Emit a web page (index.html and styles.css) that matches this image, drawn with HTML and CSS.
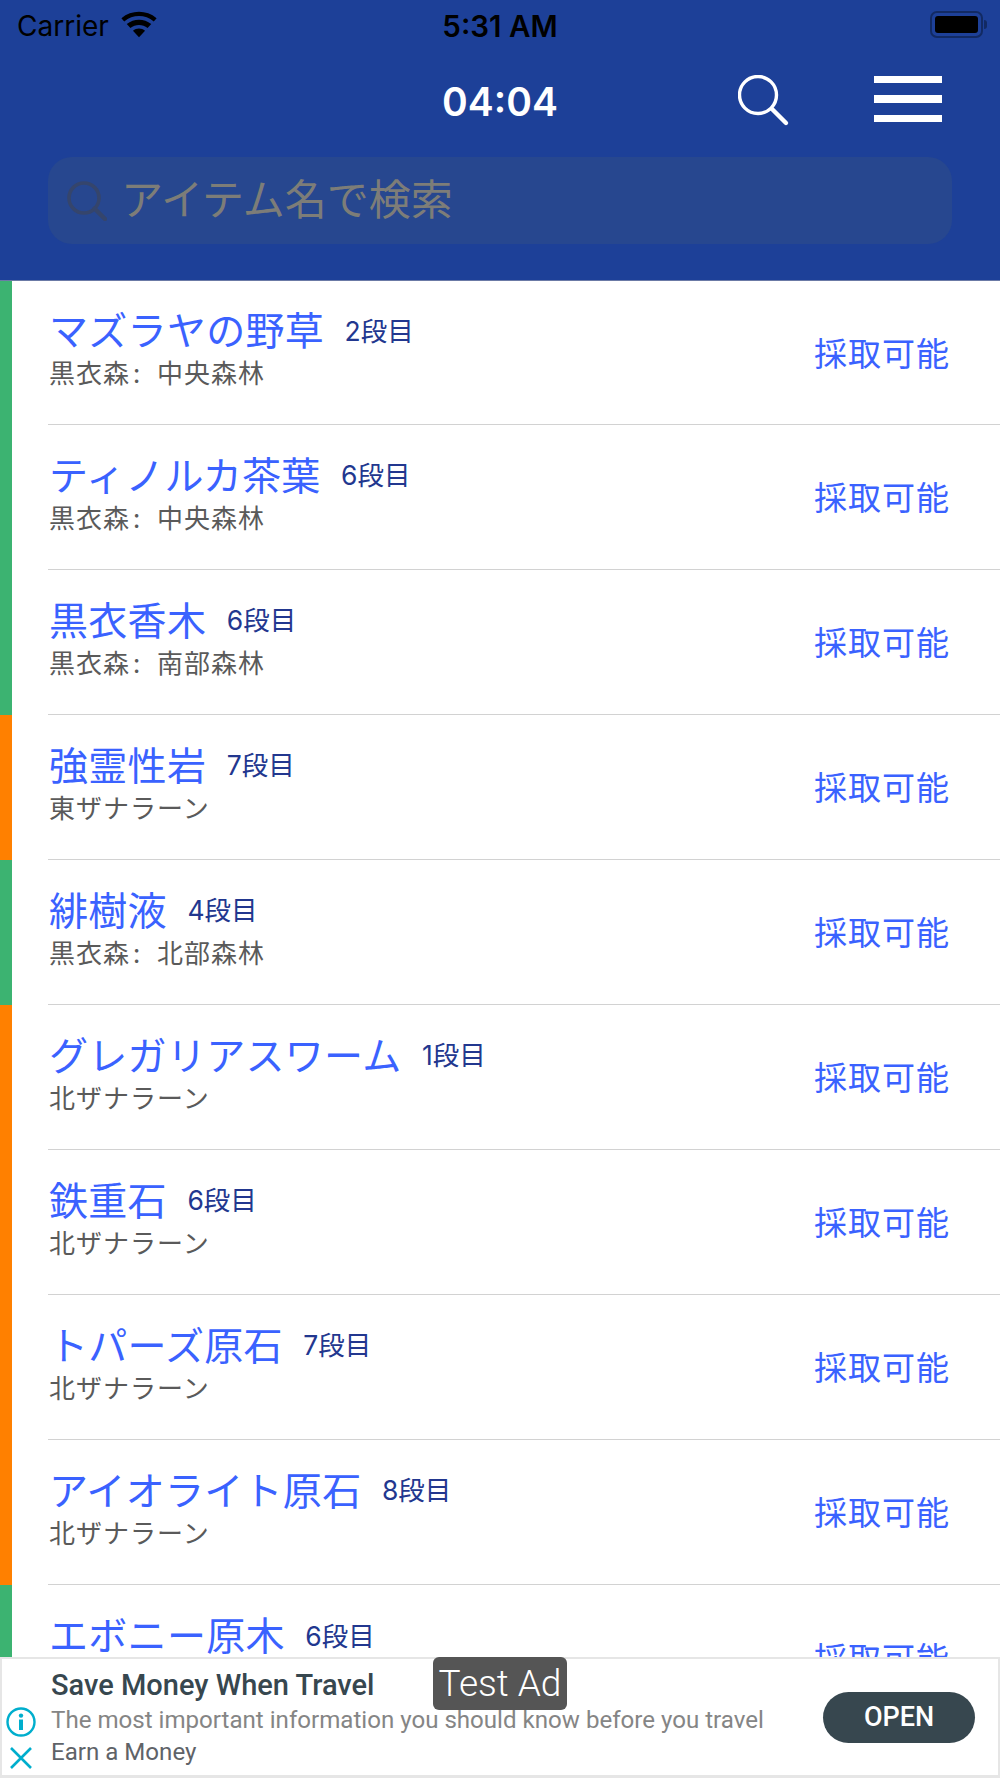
FILE: index.html
```html
<!DOCTYPE html>
<html lang="ja">
<head>
  <meta charset="UTF-8">
  <meta name="viewport" content="width=device-width, initial-scale=1.0">
  <title>採取タイマー</title>
  <link rel="stylesheet" href="styles.css">
</head>
<body>
  <header class="top">
    <!-- ios status bar -->
    <div class="status-bar">
      <div class="carrier">
        <span>Carrier</span>
        <svg class="wifi" width="36" height="27" viewBox="0 0 38 28"><path d="M19 27.5 L12.6 20.6 C16.3 17.6 21.7 17.6 25.4 20.6 Z"/><path d="M9.9 17.7 L6.1 13.6 C13.6 7.4 24.4 7.4 31.9 13.6 L28.1 17.7 C22.8 13.4 15.2 13.4 9.9 17.7 Z"/><path d="M3.4 10.8 L0.4 7.4 C11.2 -1.6 26.8 -1.6 37.6 7.4 L34.6 10.8 C25.4 3.2 12.6 3.2 3.4 10.8 Z"/></svg>
      </div>
      <div class="clock">5:31 AM</div>
      <div class="battery"><span class="battery-body"><span class="battery-fill"></span></span><span class="battery-tip"></span></div>
    </div>

    <div class="nav">
      <div class="timer">04:04</div>
      <svg class="nav-search" width="52" height="54" viewBox="0 0 52 54" fill="none" stroke="#fff" stroke-linecap="round"><circle cx="20" cy="20" r="18.5" stroke-width="3.4"/><path d="M34 34 L48 48" stroke-width="4.4"/></svg>
      <div class="burger"><span></span><span></span><span></span></div>
    </div>

    <div class="search">
      <svg width="40" height="40" viewBox="0 0 40 40" fill="none" stroke="#35456c" stroke-linecap="round"><circle cx="17" cy="17" r="15" stroke-width="3.6"/><path d="M27.5 27.5 L38 38" stroke-width="4.4"/></svg>
      <span class="placeholder">アイテム名で検索</span>
    </div>
  </header>

  <ul class="list">
    <li class="row green">
      <div class="row-body">
        <div class="info">
          <div class="name-line"><span class="name">マズラヤの野草</span><span class="step">2段目</span></div>
          <div class="place">黒衣森<span class="colon">:</span>中央森林</div>
        </div>
        <div class="state">採取可能</div>
      </div>
    </li>
    <li class="row green">
      <div class="row-body">
        <div class="info">
          <div class="name-line"><span class="name">ティノルカ茶葉</span><span class="step">6段目</span></div>
          <div class="place">黒衣森<span class="colon">:</span>中央森林</div>
        </div>
        <div class="state">採取可能</div>
      </div>
    </li>
    <li class="row green">
      <div class="row-body">
        <div class="info">
          <div class="name-line"><span class="name">黒衣香木</span><span class="step">6段目</span></div>
          <div class="place">黒衣森<span class="colon">:</span>南部森林</div>
        </div>
        <div class="state">採取可能</div>
      </div>
    </li>
    <li class="row orange">
      <div class="row-body">
        <div class="info">
          <div class="name-line"><span class="name">強霊性岩</span><span class="step">7段目</span></div>
          <div class="place">東ザナラーン</div>
        </div>
        <div class="state">採取可能</div>
      </div>
    </li>
    <li class="row green">
      <div class="row-body">
        <div class="info">
          <div class="name-line"><span class="name">緋樹液</span><span class="step">4段目</span></div>
          <div class="place">黒衣森<span class="colon">:</span>北部森林</div>
        </div>
        <div class="state">採取可能</div>
      </div>
    </li>
    <li class="row orange">
      <div class="row-body">
        <div class="info">
          <div class="name-line"><span class="name">グレガリアスワーム</span><span class="step">1段目</span></div>
          <div class="place">北ザナラーン</div>
        </div>
        <div class="state">採取可能</div>
      </div>
    </li>
    <li class="row orange">
      <div class="row-body">
        <div class="info">
          <div class="name-line"><span class="name">鉄重石</span><span class="step">6段目</span></div>
          <div class="place">北ザナラーン</div>
        </div>
        <div class="state">採取可能</div>
      </div>
    </li>
    <li class="row orange">
      <div class="row-body">
        <div class="info">
          <div class="name-line"><span class="name">トパーズ原石</span><span class="step">7段目</span></div>
          <div class="place">北ザナラーン</div>
        </div>
        <div class="state">採取可能</div>
      </div>
    </li>
    <li class="row orange">
      <div class="row-body">
        <div class="info">
          <div class="name-line"><span class="name">アイオライト原石</span><span class="step">8段目</span></div>
          <div class="place">北ザナラーン</div>
        </div>
        <div class="state">採取可能</div>
      </div>
    </li>
    <li class="row green">
      <div class="row-body">
        <div class="info">
          <div class="name-line"><span class="name">エボニー原木</span><span class="step">6段目</span></div>
        </div>
        <div class="state">採取可能</div>
      </div>
    </li>
  </ul>

  <!-- test banner -->
  <footer class="ad">
    <div class="ad-badge">Test Ad</div>
    <div class="ad-icons">
      <svg width="30" height="30" viewBox="0 0 30 30" fill="none" stroke="#00aecd"><circle cx="15" cy="15" r="13.5" stroke-width="2.4"/><circle cx="15" cy="8.6" r="2.2" fill="#00aecd" stroke="none"/><path d="M15 12.5 V23" stroke-width="4"/></svg>
      <svg class="ad-close" width="24" height="24" viewBox="0 0 24 24" fill="none" stroke="#00aecd" stroke-width="2.6"><path d="M2 2 L22 22 M22 2 L2 22"/></svg>
    </div>
    <div class="ad-text">
      <div class="ad-title">Save Money When Travel</div>
      <div class="ad-desc">The most important information you should know before you travel</div>
      <div class="ad-sub">Earn a Money</div>
    </div>
    <div class="ad-open">OPEN</div>
  </footer>
</body>
</html>
```

FILE: styles.css
```css
/* ---- page ---- */
* { box-sizing: border-box; }
html, body { margin: 0; height: 100%; }
body {
  display: flex; flex-direction: column;
  width: 1000px; height: 1778px; overflow: hidden;
  background: #fff;
  font-family: "Noto Sans CJK JP", sans-serif;
}

/* ---- blue header ---- */
.top {
  flex: none; height: 281px;
  background: #1d4098;
  border-bottom: 1px solid #6b7aa6;
}
.status-bar {
  display: grid; grid-template-columns: 1fr auto 1fr; align-items: center;
  height: 50px; padding: 2px 13px 0 13px;
  color: #000; font-family: Inter, sans-serif; font-size: 28px; line-height: 48px;
}
.carrier { display: flex; align-items: center; gap: 12px; padding-left: 4px; }
.wifi { margin-top: -4px; }
.clock { font-weight: 600; font-size: 29.5px; }
.battery { display: flex; align-items: center; justify-content: flex-end; gap: 1px; margin-top: -3px; }
.battery-body {
  display: block; width: 53px; height: 27px; padding: 3px;
  border: 2px solid #122a63; border-radius: 7px;
}
.battery-fill { display: block; height: 100%; background: #000; border-radius: 3px; }
.battery-tip { width: 3px; height: 9px; background: #122a63; border-radius: 0 3px 3px 0; }

.nav {
  position: relative;
  display: flex; align-items: center; justify-content: flex-end;
  height: 100px; padding: 0 58px 0 0;
}
.timer {
  position: absolute; left: 0; right: 0; top: 27px;
  text-align: center; color: #fff;
  font-family: Inter, sans-serif; font-weight: 600; font-size: 39px; line-height: 50px;
}
.nav-search { margin: 4px 84px 0 0; }
.burger { display: flex; flex-direction: column; gap: 12px; width: 68px; margin-top: -2px; }
.burger span { display: block; height: 7.5px; background: #fff; }

.search {
  display: flex; align-items: center; gap: 14px;
  height: 87px; margin: 7px 48px 0; padding: 0 0 0 19px;
  background: #27478f; border-radius: 24px;
}
.placeholder { color: #7d7d78; font-size: 42px; line-height: 1; padding-bottom: 8px; }

/* ---- gathering list ---- */
.list { flex: 1; min-height: 0; overflow: hidden; margin: 0; padding: 0; list-style: none; }
.row { height: 145px; border-left: 12px solid; }
.row:first-child { height: 144px; }
.green { border-left-color: #3cb371; }
.orange { border-left-color: #ff8000; }
.row-body {
  display: flex; align-items: center; justify-content: space-between;
  height: 100%; margin-left: 36px; padding: 0 50px 2px 0;
  border-bottom: 1px solid #d2d2d2;
}
.row:last-child .row-body { border-bottom: 0; }
.info { height: 87px; margin-bottom: 10px; padding-left: 1px; }
.name-line { display: flex; align-items: center; gap: 20.5px; height: 50px; }
.name { color: #3a62ff; font-size: 39px; letter-spacing: 0.3px; line-height: 50px; }
.step { margin-top: 2px; color: #22378f; font-family: Inter, "Noto Sans CJK JP", sans-serif; font-size: 26.5px; }
.place { color: #5a5a5a; font-size: 26px; letter-spacing: 1px; line-height: 36px; margin-top: 1px; }
/* colon sits left in a full cell */
.colon { display: inline-block; width: 27px; padding-left: 3px; }
.state { color: #3a62ff; font-size: 33px; letter-spacing: 1px; line-height: 40px; }

/* ---- ad banner ---- */
.ad {
  position: relative; flex: none;
  display: flex; align-items: stretch;
  height: 121px; background: #fff;
  border: 2px solid #e6e6e6; border-bottom-width: 3px;
  font-family: Roboto, sans-serif;
}
.ad-badge {
  position: absolute; left: 431px; top: -2px;
  width: 134px; height: 53px;
  background: #555; border-radius: 6px;
  color: #fff; font-weight: 300; font-size: 37px; line-height: 53px; text-align: center;
}
.ad-icons {
  flex: none; width: 49px; padding: 48px 0 0 4px;
  display: flex; flex-direction: column; align-items: flex-start; gap: 9px;
}
.ad-close { margin-left: 3px; }
.ad-text { flex: 1; min-width: 0; padding-top: 7px; }
.ad-title { color: #37474f; font-weight: 500; font-size: 29px; line-height: 38px; }
.ad-desc { color: #858585; font-size: 24.1px; line-height: 32px; white-space: nowrap; }
.ad-sub { color: #5f6368; font-size: 24.1px; line-height: 32px; }
.ad-open {
  flex: none; align-self: flex-start;
  width: 152px; height: 51px; margin: 33px 23px 0 0;
  background: #37474f; border-radius: 26px;
  color: #fff; font-weight: 500; font-size: 27px; line-height: 51px; text-align: center;
}
```
